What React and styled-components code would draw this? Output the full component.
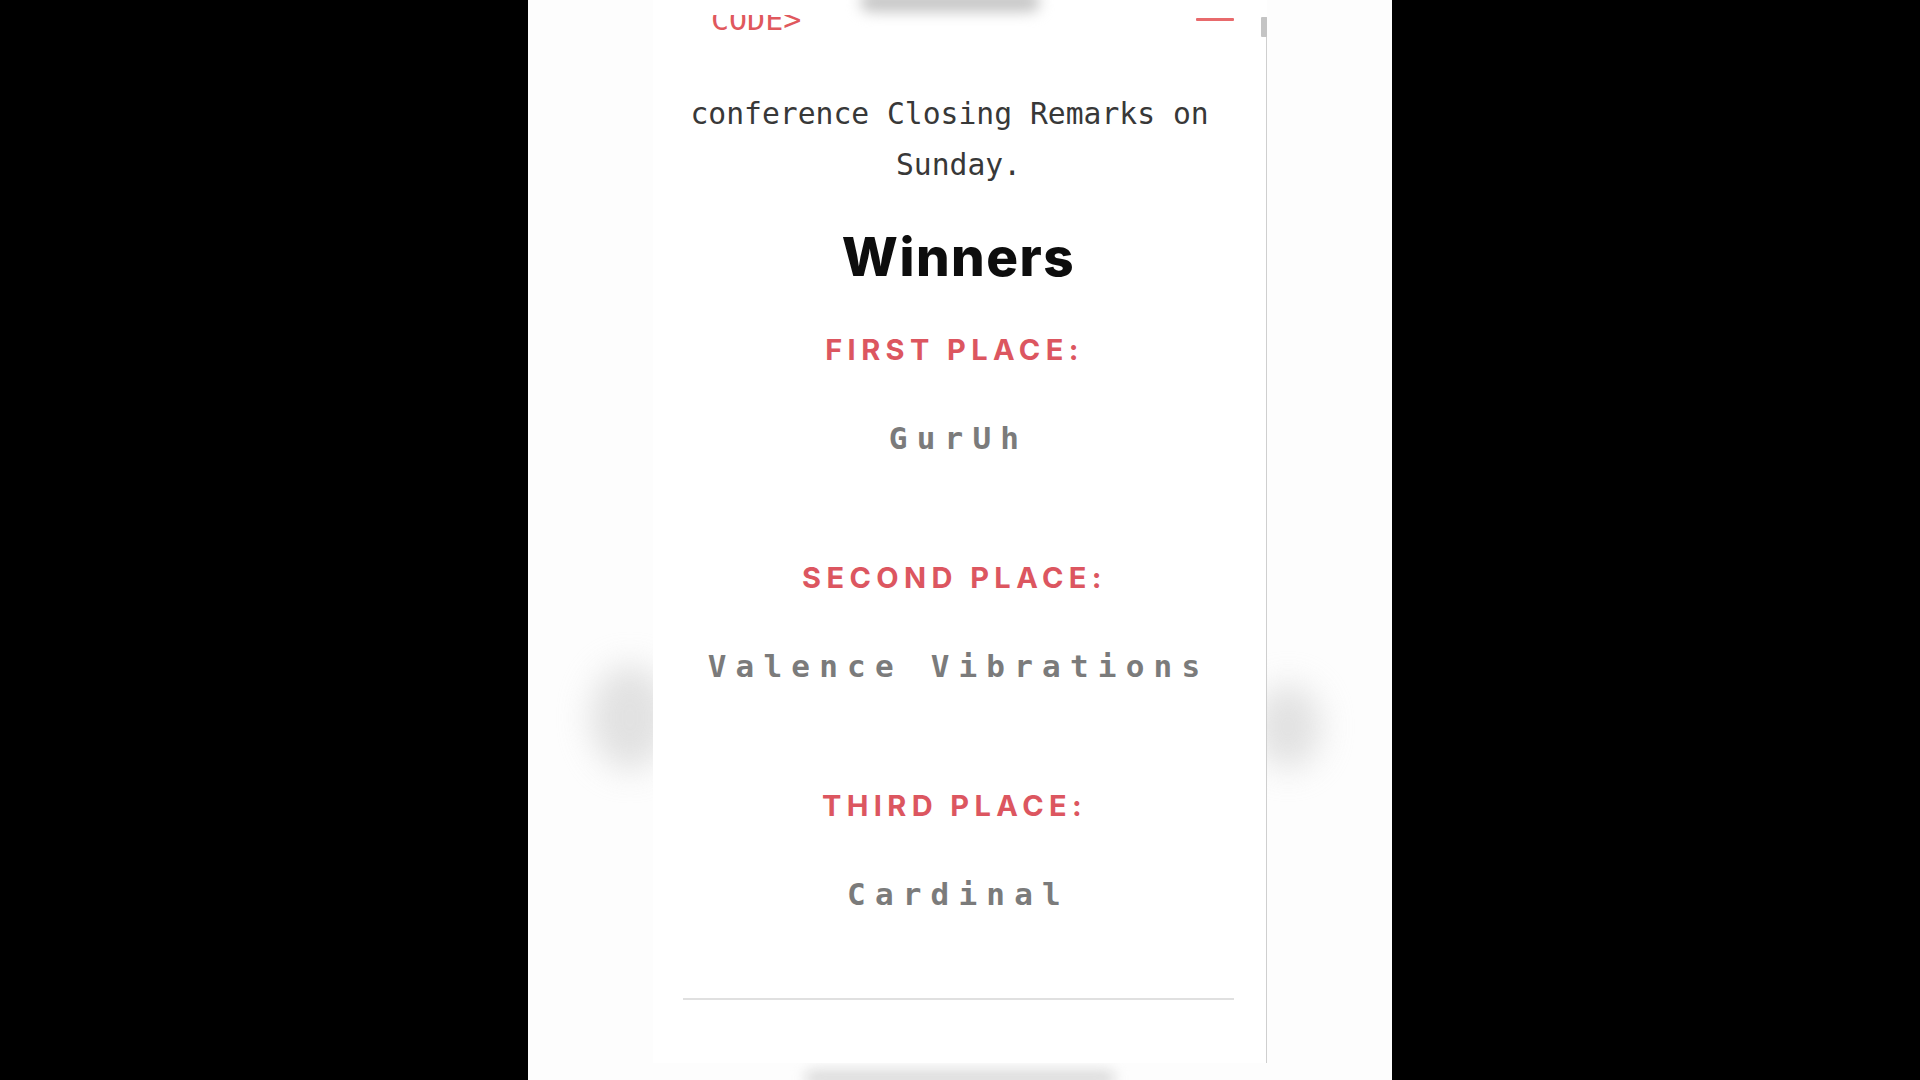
import React from "react";
import styled, { createGlobalStyle } from "styled-components";

const GlobalStyle = createGlobalStyle`
  html, body { margin: 0; padding: 0; background: #000; }
  body { width: 1920px; height: 1080px; overflow: hidden; }
  #root { height: 100%; }
`;

const Stage = styled.div`
  width: 1920px;
  height: 1080px;
  background: #000;
  display: flex;
  justify-content: center;
`;

const Screen = styled.div`
  position: relative;
  width: 864px;
  height: 1080px;
  background: #fdfdfd;
  display: flex;
  flex-direction: column;
  align-items: center;
  overflow: hidden;
`;

const SideBlur = styled.div`
  position: absolute;
  top: ${(p) => p.$top}px;
  left: ${(p) => p.$left}px;
  width: ${(p) => p.$w}px;
  height: ${(p) => p.$h}px;
  background: #d6d6d6;
  border-radius: 50%;
  filter: blur(16px);
  opacity: 0.7;
`;

const Panel = styled.div`
  position: relative;
  z-index: 1;
  flex-shrink: 0;
  width: 614px;
  height: 1063px;
  background: #fff;
  display: flex;
  flex-direction: column;
`;

const TopStrip = styled.div`
  height: 15px;
  display: flex;
  justify-content: center;
  align-items: flex-start;
`;

const TopBlur = styled.div`
  width: 180px;
  height: 20px;
  margin-top: -8px;
  margin-left: -20px;
  background: #c6c6c6;
  border-radius: 10px;
  filter: blur(7px);
`;

const Header = styled.header`
  height: 30px;
  overflow: hidden;
  display: flex;
  justify-content: space-between;
  align-items: flex-start;
  padding: 0 33px 0 58px;
`;

const Logo = styled.div`
  font-family: "DejaVu Sans Mono", monospace;
  font-size: 30px;
  line-height: 30px;
  color: #e0585d;
  margin-top: -10px;
`;

const MenuBar = styled.div`
  width: 38px;
  height: 3px;
  margin-top: 3px;
  background: #e86a6c;
  border-radius: 1px;
`;

const ScrollTrack = styled.div`
  position: absolute;
  right: 0;
  top: 17px;
  bottom: 0;
  width: 1px;
  background: #cfcfcf;
`;

const ScrollThumb = styled.div`
  position: absolute;
  right: 0;
  top: 17px;
  width: 6px;
  height: 20px;
  background: #c4c4c4;
  border-radius: 1px;
`;

const Content = styled.main`
  padding: 43px 33px 0 30px;
  display: flex;
  flex-direction: column;
  align-items: center;
  text-align: center;
`;

const Paragraph = styled.p`
  margin: 0;
  width: 100%;
  white-space: break-spaces;
  font-family: "DejaVu Sans Mono", monospace;
  font-size: 29.7px;
  line-height: 51px;
  color: #383838;
`;

const Title = styled.h2`
  margin: 35px 0 0;
  font-family: Inter, "Open Sans", sans-serif;
  font-weight: 800;
  font-size: 53px;
  line-height: 64px;
  letter-spacing: 1.5px;
  color: #0d0d0d;
`;

const PlaceList = styled.div`
  margin-top: 41px;
  width: 100%;
  display: flex;
  flex-direction: column;
  gap: 100px;
`;

const Place = styled.div`
  display: flex;
  flex-direction: column;
  gap: 48px;
`;

const Label = styled.div`
  padding-right: 8px;
  font-family: Inter, "Open Sans", sans-serif;
  font-weight: 700;
  font-size: 29px;
  line-height: 40px;
  letter-spacing: 5.4px;
  color: #dc5660;
`;

const Name = styled.div`
  font-family: "DejaVu Sans Mono", monospace;
  font-weight: 700;
  font-size: 31px;
  line-height: 40px;
  letter-spacing: 9.2px;
  color: #7b7b7b;
`;

const Divider = styled.hr`
  margin: 84px 0 0;
  width: 100%;
  height: 2px;
  border: 0;
  background: #e0e0e0;
`;

const BottomStrip = styled.div`
  height: 17px;
  width: 100%;
  display: flex;
  justify-content: center;
`;

const BottomBlur = styled.div`
  width: 310px;
  height: 14px;
  margin-top: 8px;
  background: #d6d6d6;
  border-radius: 7px;
  filter: blur(7px);
`;

const places = [
  { label: "FIRST PLACE:", name: "GurUh" },
  { label: "SECOND PLACE:", name: "Valence Vibrations" },
  { label: "THIRD PLACE:", name: "Cardinal" },
];

export default function App() {
  return (
    <>
      <GlobalStyle />
      <Stage>
        <Screen>
          <SideBlur $left={62} $top={665} $w={80} $h={105} />
          <SideBlur $left={727} $top={684} $w={66} $h={85} />
          <Panel>
            <TopStrip>
              <TopBlur />
            </TopStrip>
            <Header>
              <Logo>CODE&gt;</Logo>
              <MenuBar />
            </Header>
            <Content>
              <Paragraph>conference Closing Remarks on Sunday.</Paragraph>
              <Title>Winners</Title>
              <PlaceList>
                {places.map((p) => (
                  <Place key={p.label}>
                    <Label>{p.label}</Label>
                    <Name>{p.name}</Name>
                  </Place>
                ))}
              </PlaceList>
              <Divider />
            </Content>
            <ScrollTrack />
            <ScrollThumb />
          </Panel>
          <BottomStrip>
            <BottomBlur />
          </BottomStrip>
        </Screen>
      </Stage>
    </>
  );
}
